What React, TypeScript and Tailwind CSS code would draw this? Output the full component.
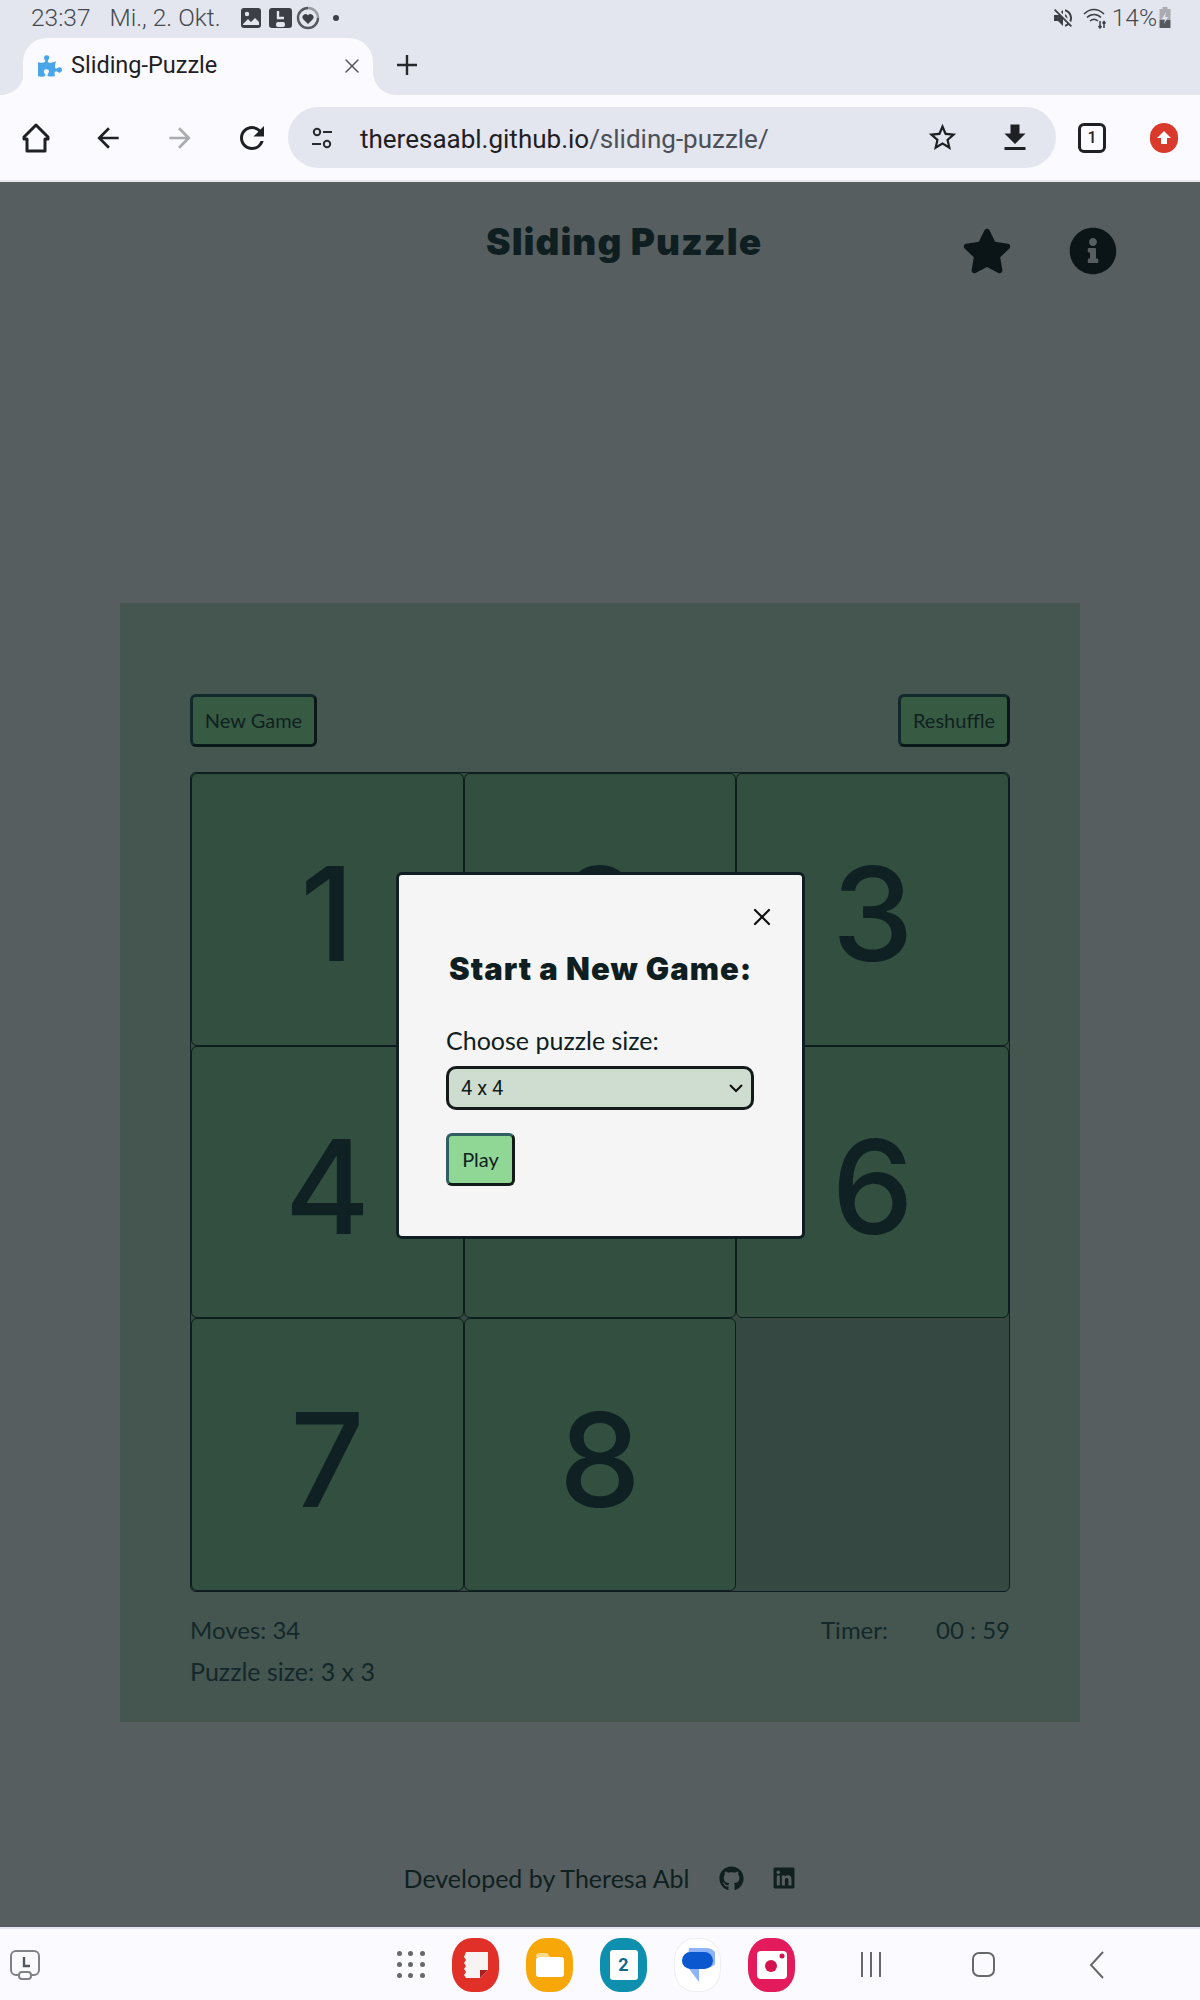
import { X } from "lucide-react";
import { FaGithub, FaLinkedin, FaStar, FaInfoCircle, FaPuzzlePiece } from "react-icons/fa";
import { MdArrowBack, MdArrowForward, MdFileDownload, MdRefresh, MdStarBorder, MdVolumeOff } from "react-icons/md";

const ui = "font-['Roboto',sans-serif]";
const page = "font-['Lato',sans-serif]";
const heading = "font-['Inter',sans-serif] font-black";

const StatusIcons = () => (
  <div className="flex items-center gap-[3px] ml-[19px] text-[#3c3f45]">
    <svg width="22" height="22" viewBox="0 0 22 22">
      <rect x="1" y="1" width="20" height="20" rx="3" fill="currentColor" />
      <circle cx="7" cy="7" r="2.2" fill="#e3e6ef" />
      <path d="M3 17l5-5 3 3 4-4 4 4v3H3z" fill="#e3e6ef" />
    </svg>
    <svg width="25" height="22" viewBox="0 0 25 22" className="ml-[3px]">
      <rect x="1" y="1" width="23" height="20" rx="3" fill="currentColor" />
      <path d="M10 4v7h6" stroke="#e3e6ef" strokeWidth="2.4" fill="none" />
      <rect x="8" y="15" width="9" height="5" rx="2" fill="#e3e6ef" />
    </svg>
    <svg width="24" height="24" viewBox="0 0 24 24">
      <path d="M12 2a10 10 0 1 0 10 10" stroke="currentColor" strokeWidth="2.4" fill="none" opacity="0.85" />
      <path d="M12 2a10 10 0 0 1 10 10" stroke="#9a9da3" strokeWidth="2.4" fill="none" />
      <path d="M12 18l-5-5a3 3 0 0 1 5-3.400a3 3 0 0 1 5 3.400z" fill="currentColor" />
    </svg>
    <span className="ml-[10px] w-[6px] h-[6px] rounded-full bg-current" />
  </div>
);

const TabCorner = ({ flip }: { flip?: boolean }) => (
  <svg width="24" height="24" viewBox="0 0 24 24" className={`self-end ${flip ? "-scale-x-100" : ""}`}>
    <path d="M24 0v24H0C14 24 24 14 24 0z" fill="#fafaff" />
  </svg>
);

const BrowserChrome = () => (
  <div className={`${ui} bg-[#e3e6ef]`}>
    <div className="h-[36px] flex items-center justify-between pl-[31px] pr-[29px] text-[#45484e] text-[24.500px] font-light">
      <div className="flex items-center">
        <span>23:37</span>
        <span className="ml-[19px]">Mi., 2. Okt.</span>
        <StatusIcons />
      </div>
      <div className="flex items-center">
        <MdVolumeOff size={24} className="text-[#3c3f45]" />
        <svg width="24" height="24" viewBox="0 0 24 24" fill="none" stroke="#3c3f45" strokeWidth="1.500" className="ml-[8px]">
          <path d="M1 8c6-6 14-6 20 0M4 11.500c4-4 10-4 14 0M7 15c2.500-2.200 5.500-2.200 8 0" />
          <path d="M17 15v7M21 22v-6M19.500 17.500l1.500-2 1.500 2M15.500 20l1.500 2 1.500-2" />
        </svg>
        <span className="ml-[5px]">14%</span>
        <svg width="12" height="22" viewBox="0 0 12 22" className="ml-[2px]">
          <rect x="3.500" y="0" width="5" height="3" fill="#a9abb0" />
          <rect x="0.500" y="2" width="11" height="11" fill="#a9abb0" />
          <rect x="0.500" y="13" width="11" height="8" fill="#55585e" />
          <path d="M7 5L3 12h3l-1 5 4-7H6z" fill="#e3e6ef" />
        </svg>
      </div>
    </div>

    <div className="h-[59px] flex text-[#1f2024]">
      <TabCorner />
      <div className="w-[350px] -ml-px mt-[2px] bg-[#fafaff] rounded-t-[24px] flex items-center pl-[15px] pr-[9px] pb-[1px]">
        <FaPuzzlePiece size={24} className="text-[#4aa6e8]" />
        <span className="ml-[9px] text-[23.500px] leading-none">Sliding-Puzzle</span>
        <X size={24} strokeWidth={1.5} className="ml-auto text-[#55585e]" />
      </div>
      <TabCorner flip />
      <svg width="24" height="24" viewBox="0 0 24 24" className="ml-[-2px] mt-[17px]" stroke="#26272b" strokeWidth="2.400">
        <path d="M12 2v20M2 12h20" />
      </svg>
    </div>

    <div className="h-[85px] bg-[#fafaff] flex items-center pl-[21px]">
      <svg width="30" height="32" viewBox="0 0 30 32" fill="none" stroke="#1f2024" strokeWidth="3" strokeLinejoin="round">
        <path d="M15 3L3 15v2h3v12h18V17h3v-2z" />
      </svg>
      <MdArrowBack size={32} className="ml-[41px] text-[#1f2024]" />
      <MdArrowForward size={32} className="ml-[40px] text-[#aaabad]" />
      <MdRefresh size={36} className="ml-[38px] text-[#1f2024]" />
      <div className="ml-[18px] w-[768px] h-[61px] rounded-full bg-[#e3e6ef] flex items-center pl-[22px] pr-[23px]">
        <svg width="24" height="24" viewBox="0 0 24 24" fill="none" stroke="#2a2b30" strokeWidth="2">
          <circle cx="7" cy="6" r="3.200" />
          <path d="M13 6h9M2 18h9" />
          <circle cx="17" cy="18" r="3.200" />
        </svg>
        <span className="ml-[26px] pt-[3px] text-[26px] text-[#1f2024]">
          theresaabl.github.io<span className="text-[#4c4f56]">/sliding-puzzle/</span>
        </span>
        <MdStarBorder size={33} className="ml-auto text-[#1f2024]" />
        <MdFileDownload size={36} className="ml-[38px] text-[#1f2024]" />
      </div>
      <div className="ml-[22px] w-[28px] h-[30px] border-[3px] border-[#1f2024] rounded-[6px] flex items-center justify-center text-[16px] font-medium text-[#1f2024]">
        1
      </div>
      <div className="ml-[44px] w-[28px] h-[30px] rounded-full bg-[#d93a2c] flex items-center justify-center">
        <svg width="16" height="16" viewBox="0 0 16 16" fill="#fff">
          <path d="M8 1l7 7h-4v6H5V8H1z" />
        </svg>
      </div>
    </div>
    <div className="h-[2px] bg-[#e8e9f0]" />
  </div>
);

const tiles = ["1", "2", "3", "4", "5", "6", "7", "8", ""];

const Board = () => (
  <section className="w-[960px] h-[1119px] mx-auto mt-[421px] bg-[#455650] px-[70px] pt-[91px] text-[#10211f]">
    <div className={`${page} flex justify-between text-[20px]`}>
      <button className="h-[53px] w-[127px] pb-[2px] rounded-[6px] border-[3px] border-[#12282b] border-b-[#0b1718] border-r-[#0b1718] bg-[#375a43]">
        New Game
      </button>
      <button className="h-[53px] w-[112px] pb-[2px] rounded-[6px] border-[3px] border-[#12282b] border-b-[#0b1718] border-r-[#0b1718] bg-[#375a43]">
        Reshuffle
      </button>
    </div>
    <div className="mt-[25px] grid grid-cols-3 h-[820px] border border-[#0e1d1e] rounded-[6px] bg-[#354842] overflow-hidden">
      {tiles.map((t) => (
        <div
          key={t || "empty"}
          className={
            t
              ? "font-['Inter',sans-serif] font-medium flex items-center justify-center pt-[10px] bg-[#324f3f] border border-[#0e1d1e] rounded-[6px] text-[130px] leading-none text-[#0f2123]"
              : ""
          }
        >
          {t}
        </div>
      ))}
    </div>
    <div className={`${page} mt-[23px] flex justify-between text-[24px] leading-[30px] text-[#14282a]`}>
      <span>Moves: 34</span>
      <span className="flex gap-[48px]">
        <span>Timer:</span>
        <span>00 : 59</span>
      </span>
    </div>
    <div className={`${page} mt-[11px] text-[25px] leading-[30px] text-[#14282a]`}>Puzzle size: 3 x 3</div>
  </section>
);

const Modal = () => (
  <div className="absolute left-[396px] top-[690px] w-[409px] h-[367px] bg-[#f5f5f5] border-[3px] border-[#0f1e21] rounded-[6px] pl-[47px] pr-[48px] pt-[28px] text-[#0f1e21]">
    <div className="flex justify-end">
      <X size={28} strokeWidth={1.9} className="text-[#111] -mr-[22px]" />
    </div>
    <h2 className={`${heading} mt-[18px] pl-[3px] text-[31px] tracking-[1px] leading-[40px] whitespace-nowrap`}>Start a New Game:</h2>
    <label className={`${page} block mt-[36px] text-[25px] leading-[30px]`}>Choose puzzle size:</label>
    <div className="mt-[11px] h-[44px] border-[3px] border-[#14191a] rounded-[10px] bg-[#cfddd0] flex items-center pl-[12px] pr-[8px] font-['Roboto',sans-serif] text-[20px]">
      <span>4 x 4</span>
      <svg width="14" height="9" viewBox="0 0 14 9" className="ml-auto" fill="none" stroke="#111" strokeWidth="2">
        <path d="M1 1l6 6 6-6" />
      </svg>
    </div>
    <button className={`${page} block mt-[23px] w-[69px] h-[53px] pb-[2px] rounded-[6px] border-[3px] border-[#2f5f63] border-b-[#14191a] border-r-[#14191a] bg-[#90d795] text-[20px]`}>
      Play
    </button>
  </div>
);

const Footer = () => (
  <footer className={`${page} mt-[141px] flex items-center justify-center text-[25px] leading-[30px] text-[#10201f]`}>
    <span>Developed by Theresa Abl</span>
    <FaGithub size={25} className="ml-[30px]" />
    <FaLinkedin size={24} className="ml-[28px]" />
  </footer>
);

const DockIcon = ({ className, children }: { className: string; children: React.ReactNode }) => (
  <div className={`w-[47px] h-[54px] rounded-[42%] flex items-center justify-center ${className}`}>{children}</div>
);

const BottomBar = () => (
  <div className="h-[73px] border-t-2 border-[#e3e6ef] bg-[#fafaff] flex items-center pl-[10px]">
    <svg width="30" height="32" viewBox="0 0 30 32" fill="none" stroke="#808285" strokeWidth="2">
      <rect x="1" y="2" width="28" height="24" rx="5" />
      <path d="M14 8v9h6" strokeWidth="2.400" stroke="#55585e" />
      <rect x="9" y="23" width="12" height="7" rx="3" fill="#fafaff" />
    </svg>
    <div className="ml-[357px] w-[28px] grid grid-cols-3 gap-x-[6px] gap-y-[6px]">
      {Array.from({ length: 9 }).map((_, i) => (
        <span key={i} className="w-[5px] h-[5px] rounded-full bg-[#66686c]" />
      ))}
    </div>
    <div className="ml-[27px] flex gap-[27px]">
      <DockIcon className="bg-[#e13028]">
        <svg width="28" height="30" viewBox="0 0 28 30">
          <path d="M4 2h22v18l-8 8H4l-2-3 2-3-2-3 2-3-2-3 2-3-2-3z" fill="#f6f3f2" />
          <path d="M18 28v-8h8z" fill="#a81f1c" />
        </svg>
      </DockIcon>
      <DockIcon className="bg-[#f7a708]">
        <svg width="30" height="26" viewBox="0 0 30 26">
          <path d="M1 4a3 3 0 0 1 3-3h8l3 4H1z" fill="#fdd98a" />
          <rect x="1" y="5" width="28" height="20" rx="3" fill="#fff" />
        </svg>
      </DockIcon>
      <DockIcon className="bg-[#0e8fae]">
        <div className="w-[28px] h-[30px] bg-white rounded-[3px] flex items-center justify-center text-[18px] font-bold text-[#0f6a8c] font-['Roboto',sans-serif]">
          2
        </div>
      </DockIcon>
      <DockIcon className="bg-white border border-[#eeeef3]">
        <svg width="34" height="36" viewBox="0 0 34 36">
          <path d="M8 1h18a8 8 0 0 1 0 20h-8v14L6 19z" fill="#8fb3f8" />
          <rect x="1" y="5" width="31" height="17" rx="8.500" fill="#0b57d0" />
        </svg>
      </DockIcon>
      <DockIcon className="bg-[#e31b5c]">
        <svg width="30" height="28" viewBox="0 0 30 28">
          <rect x="0" y="0" width="30" height="28" rx="4" fill="#fff" />
          <circle cx="14" cy="15" r="6" fill="#d4124f" />
          <circle cx="25" cy="5" r="2.500" fill="#d4124f" />
        </svg>
      </DockIcon>
    </div>
    <div className="ml-[66px] flex gap-[7px]">
      <span className="w-[2px] h-[25px] bg-[#66686c]" />
      <span className="w-[2px] h-[25px] bg-[#66686c]" />
      <span className="w-[2px] h-[25px] bg-[#66686c]" />
    </div>
    <div className="ml-[91px] w-[23px] h-[25px] border-2 border-[#66686c] rounded-[7px]" />
    <svg width="16" height="28" viewBox="0 0 16 28" className="ml-[94px]" fill="none" stroke="#66686c" strokeWidth="2">
      <path d="M14 1L2 14l12 13" />
    </svg>
  </div>
);

export default function App() {
  return (
    <div className="w-[1200px] h-[2000px] flex flex-col overflow-hidden">
      <BrowserChrome />
      <main className="relative flex-1 bg-[#565e60]">
        <div className={`${heading} h-0 text-[#0f1e21]`}>
          <div className="flex items-start pt-[36px]">
            <h1 className="ml-[486px] w-[276px] text-[37px] tracking-[1px] leading-[48px] whitespace-nowrap">Sliding Puzzle</h1>
            <FaStar size={50} className="ml-[200px] mt-[8px] text-[#0b1517]" />
            <FaInfoCircle size={48} className="ml-[57px] mt-[9px] text-[#0b1517]" />
          </div>
        </div>
        <Board />
        <Footer />
        <Modal />
      </main>
      <BottomBar />
    </div>
  );
}
